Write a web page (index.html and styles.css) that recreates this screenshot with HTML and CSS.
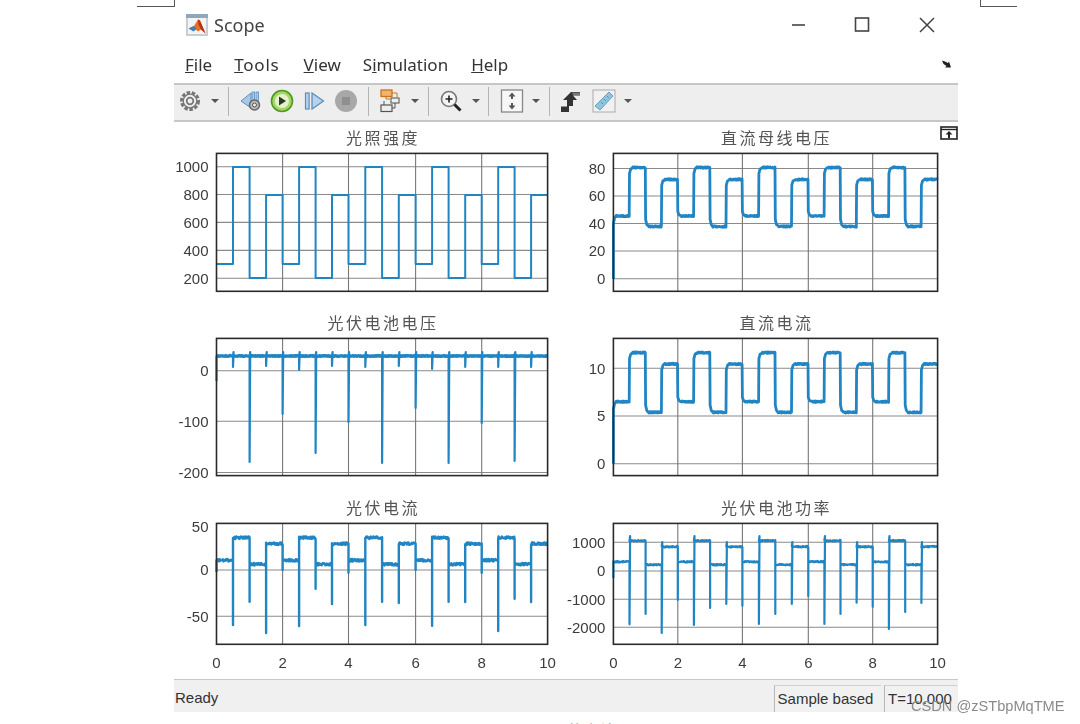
FILE: index.html
```html
<!DOCTYPE html>
<html lang="zh">
<head>
<meta charset="utf-8">
<title>Scope</title>
<link rel="stylesheet" href="styles.css">
</head>
<body>
<div class="page">
  <div class="corner corner-left"></div>
  <div class="corner corner-right"></div>
  <div class="window">
    <header class="titlebar">
      <svg class="app-icon" viewBox="0 0 22 22">
        <rect x="0" y="0" width="22" height="22" fill="#c9ced4"/>
        <rect x="0" y="0" width="22" height="4" fill="#8fa6bd"/>
        <rect x="2" y="4" width="18" height="16" fill="#f4f4f4"/>
        <path d="M2.500 14.500l5.500-2.500 4-6.500 2 1 5.500 13-4.500-4-3 2-3.500-3z" fill="#e8701f"/>
        <path d="M12 5.500l2 1 5.500 13-4.500-4-2.500-5z" fill="#b5351b"/>
        <path d="M2.500 14.500l5.500-2.500 2.500 3-3 2.500z" fill="#3f7fb5"/>
      </svg>
      <span class="app-title">Scope</span>
      <div class="win-controls">
        <svg class="win-btn" viewBox="0 0 16 16"><path d="M3 8h13" stroke="#444" stroke-width="1.6"/></svg>
        <svg class="win-btn" viewBox="0 0 16 16"><rect x="1.500" y="1" width="13" height="13" fill="none" stroke="#444" stroke-width="1.6"/></svg>
        <svg class="win-btn" viewBox="0 0 16 16"><path d="M1 1l14 14M15 1L1 15" stroke="#444" stroke-width="1.5"/></svg>
      </div>
    </header>
    <nav class="menubar">
      <span class="menu-item"><u>F</u>ile</span>
      <span class="menu-item menu-tools"><u>T</u>ools</span>
      <span class="menu-item"><u>V</u>iew</span>
      <span class="menu-item menu-sim">S<u>i</u>mulation</span>
      <span class="menu-item"><u>H</u>elp</span>
      <svg class="dock-arrow" viewBox="0 0 12 10"><path d="M1 1.500l3 1 3 1.500 1-1.500 2 6-6 0 1.500-1.500-3-2z" fill="#222"/></svg>
    </nav>
    <div class="toolbar">
      <svg class="tool" viewBox="0 0 24 24"><g fill="none" stroke="#777"><circle cx="12" cy="12" r="8.500" stroke-width="3" stroke-dasharray="3.500 1.700"/><circle cx="12" cy="12" r="6.800" stroke-width="1.300"/><circle cx="12" cy="12" r="3.300" stroke-width="1.700"/></g></svg>
      <i class="caret ml-9"></i>
      <i class="sep ml-9"></i>
      <svg class="tool ml-10" viewBox="0 0 24 24"><path d="M12 4L2 12l10 7z" fill="#a9c8e6" stroke="#5c8fbe"/><rect x="13" y="3" width="2.600" height="9" fill="#a9c8e6" stroke="#5c8fbe" stroke-width=".8"/><rect x="17" y="3" width="2.600" height="9" fill="#a9c8e6" stroke="#5c8fbe" stroke-width=".8"/><circle cx="15.500" cy="16" r="5" fill="#bbb" stroke="#666" stroke-width="1.500"/><circle cx="15.500" cy="16" r="2" fill="#eee" stroke="#555"/></svg>
      <svg class="tool ml-7" viewBox="0 0 24 24"><circle cx="12" cy="12" r="10.500" fill="#a6d66a" stroke="#4d9a22" stroke-width="1.600"/><circle cx="12" cy="12" r="7" fill="#e4f3cc"/><path d="M9 7.500l7 4.500-7 4.500z" fill="#2c3a22"/></svg>
      <svg class="tool ml-8" viewBox="0 0 24 24"><rect x="3.500" y="4" width="3.600" height="16" fill="#b6d3ec" stroke="#5c8fbe" stroke-width="1.200"/><path d="M10 4l11.500 8L10 20z" fill="#b6d3ec" stroke="#5c8fbe" stroke-width="1.300"/></svg>
      <svg class="tool ml-8" viewBox="0 0 24 24"><circle cx="12" cy="12" r="11" fill="#a8a8a8"/><rect x="8" y="8" width="8" height="8" fill="#8f8f8f"/></svg>
      <i class="sep ml-10"></i>
      <svg class="tool ml-9" viewBox="0 0 24 24"><rect x="3" y="1" width="11" height="6.500" fill="#f2b36b" stroke="#c8741e" stroke-width="1.300"/><path d="M14 4h5v4M8 7.500v2.500h4" fill="none" stroke="#c8741e"/><rect x="13" y="9" width="8" height="5" fill="#eee" stroke="#666" stroke-width="1.200"/><rect x="3" y="16" width="11" height="6.500" fill="#eee" stroke="#555" stroke-width="1.200"/><path d="M17 14v5h-3M6 12v4" fill="none" stroke="#555"/></svg>
      <i class="caret ml-9"></i>
      <i class="sep ml-9"></i>
      <svg class="tool ml-10" viewBox="0 0 24 24"><circle cx="10" cy="10" r="7.500" fill="#f4f4f4" stroke="#777" stroke-width="1.600"/><path d="M6.500 10h7M10 6.500v7" stroke="#222" stroke-width="1.600"/><path d="M15.500 15.500l6 6" stroke="#222" stroke-width="3"/></svg>
      <i class="caret ml-9"></i>
      <i class="sep ml-8"></i>
      <svg class="tool ml-11" viewBox="0 0 24 24"><rect x="1.500" y="1" width="21" height="22" fill="#f7f7f7" stroke="#888" stroke-width="1.300"/><path d="M12 3.500l-3.500 4H11V10h2V7.500h2.500zM12 20.500l-3.500-4H11V14h2v2.500h2.500z" fill="#555"/></svg>
      <i class="caret ml-8"></i>
      <i class="sep ml-9"></i>
      <svg class="tool ml-8" viewBox="0 0 24 24"><path d="M5 11l8-8h9v3.500h-7l4 4.500h-4v6h-4v6H3v-5.500h6V11z" fill="#333"/><path d="M14 3.500h8V6h-7z" fill="#777"/></svg>
      <svg class="tool ml-10" viewBox="0 0 24 24"><rect x="1" y="1" width="22" height="22" fill="#f1f1f1" stroke="#aaa"/><path d="M17 3l4 4L8 21l-5-4z" fill="#8ec5e2" stroke="#6a9fbb"/><path d="M15 7l2 2M12 10l2 2M9 13l2 2" stroke="#5f93ad"/></svg>
      <i class="caret ml-8"></i>
    </div>
    <main class="plots">
      <svg class="undock" viewBox="0 0 18 14"><rect x="1" y="1" width="16" height="12" fill="#fff" stroke="#222" stroke-width="1.600"/><path d="M1 3.500h16" stroke="#222" stroke-width="1.400"/><path d="M9 5l-3.500 3.500H8V12h2V8.500h2.500z" fill="#222"/></svg>
      <section class="plot plot-left">
        <h2 class="plot-title">光照强度</h2>
        <svg class="axes axes-tall-left" id="p1" viewBox="216 153 332 138"></svg>
      </section>
      <section class="plot plot-right">
        <h2 class="plot-title">直流母线电压</h2>
        <svg class="axes axes-tall-right" id="p2" viewBox="613 153 325 138"></svg>
      </section>
      <section class="plot plot-left">
        <h2 class="plot-title">光伏电池电压</h2>
        <svg class="axes axes-tall-left" id="p3" viewBox="216 338 332 138"></svg>
      </section>
      <section class="plot plot-right">
        <h2 class="plot-title">直流电流</h2>
        <svg class="axes axes-tall-right" id="p4" viewBox="613 338 325 138"></svg>
      </section>
      <section class="plot plot-left">
        <h2 class="plot-title">光伏电流</h2>
        <svg class="axes axes-short-left" id="p5" viewBox="216 523 332 121"></svg>
      </section>
      <section class="plot plot-right">
        <h2 class="plot-title">光伏电池功率</h2>
        <svg class="axes axes-short-right" id="p6" viewBox="613 523 325 121"></svg>
      </section>
    </main>
    <footer class="statusbar">
      <span class="status-text">Ready</span>
      <span class="status-cell status-mode">Sample based</span>
      <span class="status-cell status-time">T=10.000</span>
    </footer>
  </div>
  <div class="caption">图 11 仿真结果</div>
  <div class="watermark">CSDN @zSTbpMqTME</div>
</div>
<script src="script.js"></script>
</body>
</html>
```
FILE: styles.css
```css
* { box-sizing: border-box; }
html, body { margin: 0; padding: 0; background: #fff; }
.page {
  position: relative;
  width: 1080px;
  height: 724px;
  overflow: hidden;
  padding-left: 174px;
  background: #fff;
  font-family: "Noto Sans", "Liberation Sans", sans-serif;
}
.corner { position: absolute; top: 0; height: 7px; border-bottom: 1px solid #555; }
.corner-left { left: 137px; width: 38px; border-right: 1px solid #555; }
.corner-right { left: 980px; width: 37px; border-left: 1px solid #555; }
.window {
  width: 784px;
  height: 712px;
  display: flex;
  flex-direction: column;
  filter: blur(0.55px);
}
.titlebar { height: 48px; display: flex; align-items: center; padding: 2px 0 0 12px; }
.app-icon { width: 22px; height: 22px; }
.app-title { margin-left: 6px; font-size: 18px; color: #444; }
.win-controls { margin-left: auto; display: flex; gap: 49px; padding-right: 23px; align-items: center; }
.win-btn { width: 16px; height: 16px; }
.menubar {
  height: 35px;
  display: flex;
  align-items: center;
  padding: 0 5px 3px 11px;
  font-size: 17px;
  color: #333;
}
.menu-item { margin-right: 22px; }
.menu-tools { letter-spacing: 0.8px; margin-right: 24px; }
.menu-sim { margin-right: 23px; }
.dock-arrow { margin-left: auto; width: 12px; height: 10px; }
.toolbar {
  height: 39px;
  display: flex;
  align-items: center;
  padding: 0 0 3px 4px;
  background: #eee;
  border-top: 2px solid #c6c6c6;
  border-bottom: 2px solid #c6c6c6;
}
.tool { width: 24px; height: 24px; flex: none; }
.caret { width: 8px; height: 4px; flex: none; display: flex; justify-content: center; }
.caret::before { content: ""; border-left: 4px solid transparent; border-right: 4px solid transparent; border-top: 4px solid #555; }
.sep { width: 1px; height: 29px; flex: none; background: #b4b4b4; }
.ml-7 { margin-left: 7px; }
.ml-8 { margin-left: 8px; }
.ml-9 { margin-left: 9px; }
.ml-10 { margin-left: 10px; }
.ml-11 { margin-left: 11px; }
.plots {
  position: relative;
  flex: 1;
  display: grid;
  grid-template-columns: 394px 390px;
  grid-template-rows: 169px 169px 1fr;
  row-gap: 16px;
}
.undock { position: absolute; top: 4px; right: 0; width: 18px; height: 14px; }
.plot { padding-right: 20px; min-width: 0; }
.plot-left { padding-left: 42px; }
.plot-right { padding-left: 45px; }
.plot-title {
  margin: 0;
  height: 31px;
  line-height: 31px;
  padding-left: 2px;
  text-align: center;
  font-family: "Noto Sans CJK SC", sans-serif;
  font-size: 16px;
  font-weight: 400;
  letter-spacing: 2.5px;
  color: #555;
}
.axes { display: block; overflow: visible; }
.axes-tall-left { width: 332px; height: 138px; }
.axes-tall-right { width: 325px; height: 138px; }
.axes-short-left { width: 332px; height: 121px; }
.axes-short-right { width: 325px; height: 121px; }
.tick-label { font-family: "Liberation Sans", sans-serif; font-size: 15px; fill: #3c3c3c; }
.statusbar {
  height: 33px;
  display: flex;
  align-items: center;
  background: #f0f0f0;
  border-top: 1px solid #c8c8c8;
  font-family: "Liberation Sans", sans-serif;
  font-size: 15px;
  color: #333;
}
.status-text { padding: 3px 0 0 1px; margin-right: auto; }
.status-cell {
  height: 27px;
  line-height: 25px;
  margin-top: 4px;
  text-align: center;
  border-left: 1px solid #b8b8b8;
  border-top: 1px solid #d0d0d0;
  background: #f1f1f1;
}
.status-mode { width: 107px; margin-right: 3px; padding-right: 5px; }
.status-time { width: 73px; margin-right: 1px; padding-right: 2px; }
.caption {
  position: absolute;
  left: 490px;
  top: 718px;
  font-family: "Noto Sans CJK SC", sans-serif;
  font-size: 16px;
  color: #888;
  word-spacing: 18px;
}
.watermark {
  position: absolute;
  left: 911px;
  top: 698px;
  font-family: "Liberation Sans", sans-serif;
  font-size: 14.6px;
  color: #8a8a8a;
}
```
FILE: script.js
```js
(function () {
  var NS = "http://www.w3.org/2000/svg";
  var XL = [216.5, 282.6, 348.5, 415.6, 481.7, 547.6];
  var XR = [613.4, 677.8, 742.4, 808.3, 872.7, 937.6];
  var BLUE = "#2185c4";
  var seed = 7;
  function rnd() { seed = (seed * 16807) % 2147483647; return seed / 2147483647 - 0.5; }
  function xAt(X, t) {
    var i = Math.min(4, Math.floor(t / 2));
    return X[i] + (X[i + 1] - X[i]) * (t - i * 2) / 2;
  }
  function el(parent, name, attrs, text) {
    var e = document.createElementNS(NS, name);
    for (var k in attrs) e.setAttribute(k, attrs[k]);
    if (text !== undefined) e.textContent = text;
    parent.appendChild(e);
    return e;
  }
  function trace(X, o) {
    var pts = [];
    var prev = o.start;
    if (o.start !== undefined) pts.push([X[0], o.start]);
    for (var n = 0; n < 20; n++) {
      var t0 = n * 0.5, y = o.levels[n % 4];
      var x0 = xAt(X, t0), x1 = xAt(X, t0 + 0.5);
      if (n > 0 && o.spikes) {
        pts.push([x0, o.spikes[n - 1]]);
        if (o.over && o.over[n % 4] !== undefined) pts.push([x0 + 0.6, o.over[n % 4]]);
      }
      var ease = o.ease || 0;
      if (ease && prev !== undefined) {
        pts.push([x0, y + (prev - y) * 0.12]);
        pts.push([x0 + ease * 0.4, y + (prev - y) * 0.03]);
      }
      var steps = o.noise ? 40 : 1;
      for (var s = 0; s <= steps; s++) {
        var x = x0 + ease + (x1 - x0 - ease - (ease ? 0.3 : 0)) * s / steps;
        pts.push([x, y + (o.noise ? rnd() * o.noise : 0)]);
      }
      prev = y;
    }
    return pts.map(function (p) { return p[0].toFixed(1) + "," + p[1].toFixed(1); }).join(" ");
  }
  function draw(id, X, top, bottom, yTicks, labels, o) {
    var svg = document.getElementById(id);
    yTicks.forEach(function (t) {
      if (t[2] !== false) {
        el(svg, "line", { x1: X[0], x2: X[5], y1: t[0], y2: t[0], stroke: "#8a8a8a", "stroke-width": 1.1 });
      }
      el(svg, "text", { x: X[0] - 8, y: t[0] + 5.4, "text-anchor": "end", "class": "tick-label" }, t[1]);
    });
    for (var i = 1; i < 5; i++) {
      el(svg, "line", { x1: X[i], x2: X[i], y1: top, y2: bottom, stroke: "#777", "stroke-width": 1.1 });
    }
    el(svg, "polyline", { points: trace(X, o), fill: "none", stroke: BLUE, "stroke-width": o.width, "stroke-linejoin": "round" });
    if (o.band) {
      el(svg, "line", { x1: X[0], x2: X[5], y1: o.band, y2: o.band, stroke: BLUE, "stroke-width": 3 });
    }
    el(svg, "rect", { x: X[0], y: top, width: X[5] - X[0], height: bottom - top, fill: "none", stroke: "#2a2a2a", "stroke-width": 1.6 });
    if (labels) {
      for (var j = 0; j < 6; j++) {
        el(svg, "text", { x: X[j], y: bottom + 23.5, "text-anchor": "middle", "class": "tick-label" }, String(j * 2));
      }
    }
  }
  draw("p1", XL, 153.4, 291.3,
    [[166.7, "1000"], [194.5, "800"], [222.4, "600"], [250.4, "400"], [278.3, "200"]], false,
    { levels: [264, 167, 278, 195], width: 2, start: 264 });
  draw("p2", XR, 153.4, 291.3,
    [[168.5, "80"], [196, "60"], [223.5, "40"], [251, "20"], [278.7, "0"]], false,
    { levels: [216, 167.5, 226.5, 179.5], width: 2.8, noise: 1.4, ease: 3, start: 279 });
  draw("p3", XL, 338.4, 475.6,
    [[370.7, "0"], [421.3, "-100"], [472.5, "-200"]], false,
    { levels: [356, 356, 356, 356], width: 2.2, noise: 2, start: 381, band: 356,
      spikes: [367, 462, 366, 414, 370, 453, 366, 422, 367, 463, 366, 408, 369, 463, 367, 423, 367, 461, 367],
      over: { 1: 352, 2: 352, 3: 352, 0: 352 } });
  draw("p4", XR, 338.4, 475.6,
    [[368.2, "10"], [416, "5"], [463.7, "0"]], false,
    { levels: [401.7, 352.7, 412.3, 364], width: 2.8, noise: 1.4, ease: 3, start: 463.7 });
  draw("p5", XL, 523.4, 644.3,
    [[527, "50", false], [570, "0"], [616.3, "-50"]], true,
    { levels: [560.3, 537.7, 564.3, 543.7], width: 2.4, noise: 2.6, start: 572,
      spikes: [625, 601.7, 633, 570, 626, 588.7, 604, 572.7, 625, 601.7, 603, 570, 625.7, 601.7, 602, 572.7, 631, 598.7, 602] });
  draw("p6", XR, 523.4, 644.3,
    [[542.3, "1000"], [571, "0"], [599.3, "-1000"], [627.3, "-2000"]], true,
    { levels: [561.7, 540.7, 564.7, 546.7], width: 2.2, noise: 1.4, start: 578,
      spikes: [624.3, 614, 633, 600, 625, 608, 604, 605.7, 624, 614, 604, 596, 624, 614, 602.7, 606.7, 629, 612, 603],
      over: { 1: 536, 3: 542 } });
})();
```
